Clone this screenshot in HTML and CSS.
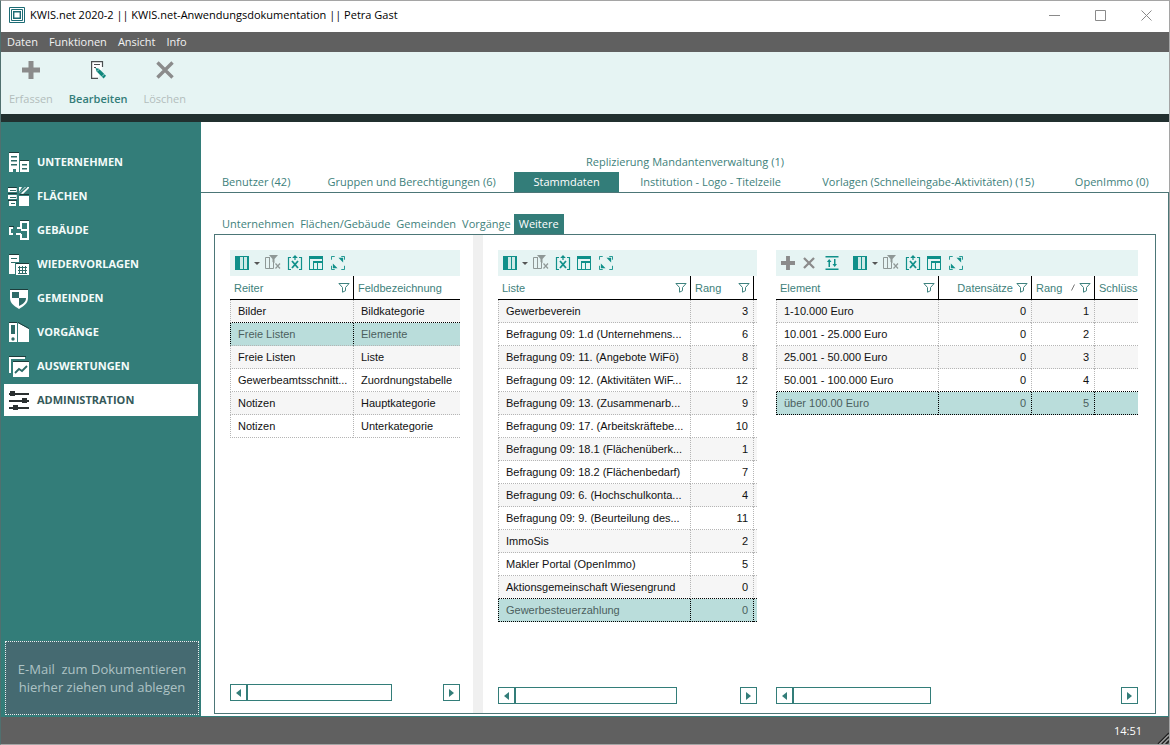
FILE: index.html
```html
<!DOCTYPE html>
<html lang="de">
<head>
<meta charset="utf-8">
<title>KWIS.net 2020-2</title>
<link rel="stylesheet" href="styles.css">
</head>
<body>
<svg class="sprite" aria-hidden="true">
  <symbol id="i-columns" viewBox="0 0 14 14"><path fill="#cfeae7" d="M5 1h8v12H5z"/><path fill="#10908a" d="M0 0h5v14H0zM5 0h9v1H5zM5 13h9v1H5zM12 0h2v14h-2zM8 0h1v14H8z"/></symbol>
  <symbol id="i-clear" viewBox="0 0 16 16"><path fill="none" stroke="#8f9896" d="M4.500 2.500H.5v11H5M4.500 2v12M4.500 13.500H8.500V6"/><path fill="#8f9896" d="M4 0h9l-3.500 4v4L7.500 7V4z"/><path stroke="#8f9896" stroke-width="1.200" d="M10.500 8.500l4.500 5M15 8.500l-4.500 5"/></symbol>
  <symbol id="i-excel" viewBox="0 0 15 16"><path fill="none" stroke="#10908a" stroke-width="1.200" d="M3.500 2.500H1v12h2.500M11.500 2.500H14v12h-2.500M7.500 1v4"/><path fill="#10908a" d="M7.500 0l2.800 3H4.700z"/><path stroke="#10908a" stroke-width="1.800" d="M4.500 6l6 7M10.500 6l-6 7"/></symbol>
  <symbol id="i-table" viewBox="0 0 14 14"><path fill="#10908a" d="M0 0h14v3H0zM0 3h1v11H0zM13 3h1v11h-1zM0 13h14v1H0zM4 5h10v2H4zM4 5h1v9H4zM8 5h1v9H8z"/></symbol>
  <symbol id="i-expand" viewBox="0 0 15 15"><path fill="none" stroke="#10908a" d="M.5 4V.5H4M11 .5h3.500V4M.5 10.500v4H4M11 14.500h3.500v-4"/><path fill="#10908a" d="M8 2h5v5zM2 8l5 5H2z"/></symbol>
  <symbol id="i-plus" viewBox="0 0 18 18"><path fill="#8b8b8b" d="M6.500 0h5v6.500H18v5h-6.500V18h-5v-6.500H0v-5h6.500z"/></symbol>
  <symbol id="i-cross" viewBox="0 0 16 16"><path fill="none" stroke="#8b8b8b" stroke-width="3" d="M1.300 1.300l13.400 13.400M14.700 1.300L1.300 14.700"/></symbol>
  <symbol id="i-sort" viewBox="0 0 13 14"><path fill="#10908a" d="M0 0h13v1.500H0zM0 12.500h13V14H0zM3 5h1.500v6H3zM8.500 3H10v6H8.500zM3.700 3L6 6H1.400zM9.200 11L7 8h4.500z"/></symbol>
  <symbol id="i-funnel" viewBox="0 0 12 10"><path fill="none" stroke="#3e827e" d="M.9.500h10.200L7.500 4.500v3.200l-3 1.500V4.500z"/></symbol>
  <symbol id="i-left" viewBox="0 0 5 8"><path fill="#337d79" d="M5 0v8L0 4z"/></symbol>
  <symbol id="i-right" viewBox="0 0 5 8"><path fill="#337d79" d="M0 0v8l5-4z"/></symbol>
  <symbol id="i-caret" viewBox="0 0 6 3"><path fill="#555" d="M0 0h6L3 3z"/></symbol>
</svg>

<div class="window">
  <header class="titlebar">
    <svg class="logo" viewBox="0 0 16 16" aria-hidden="true"><path fill="#fff" stroke="#1c6b74" d="M.5.500h15v15H.5z"/><path fill="none" stroke="#1c6b74" d="M2.500 2.500h11v11h-11z"/><path fill="#fff" stroke="#1c6b74" stroke-width="1.400" d="M4.700 4.700h6.600v6.600H4.700z"/></svg>
    <h1 class="caption">KWIS.net 2020-2 || KWIS.net-Anwendungsdokumentation || Petra Gast</h1>
    <div class="controls">
      <button class="control" aria-label="Minimieren"><svg viewBox="0 0 11 11"><path stroke="#8a8a8a" d="M0 5.500h11"/></svg></button>
      <button class="control" aria-label="Maximieren"><svg viewBox="0 0 11 11"><path fill="none" stroke="#8a8a8a" d="M.5.500h10v10H.5z"/></svg></button>
      <button class="control" aria-label="Schließen"><svg viewBox="0 0 11 11"><path stroke="#8a8a8a" d="M.5.500l10 10M10.500.5l-10 10"/></svg></button>
    </div>
  </header>

  <nav class="menubar">
    <button>Daten</button><button>Funktionen</button><button>Ansicht</button><button>Info</button>
  </nav>

  <div class="ribbon">
    <button class="tool" disabled><svg class="big"><use href="#i-plus"/></svg><span>Erfassen</span></button>
    <button class="tool current"><svg class="big" viewBox="0 0 18 18"><path fill="#fff" stroke="#4b4f50" stroke-width="1.200" d="M13.500 6V.6H2.600v16.800H9"/><path stroke="#4b4f50" d="M5 3.500h6M5 6.500h2"/><path fill="#10877c" d="M6.500 7l3.500.8 7 7-2.400 2.700-7-7z"/><path stroke="#e6f4f3" stroke-width=".7" d="M8 10.500L10.500 8M13 15.500l2.500-2.500"/></svg><span>Bearbeiten</span></button>
    <button class="tool" disabled><svg class="big"><use href="#i-cross"/></svg><span>Löschen</span></button>
  </div>

  <div class="body">
    <aside class="sidebar">
      <nav class="nav">
        <a href="#u"><svg viewBox="0 0 21 21"><path fill="#fff" d="M1 1h10v19H8v-3H5v3H1zM12 9h9v11h-9z"/><path fill="#1d3c3b" d="M1 0h10v1H1zM12 8h9v1h-9z"/><path fill="#2e6b68" d="M3 4h6v1.500H3zM3 8h6v1.500H3zM3 12h6v1.500H3zM14 12h5v1.500h-5zM14 16h5v1.500h-5z"/></svg>UNTERNEHMEN</a>
        <a href="#f"><svg viewBox="0 0 21 21"><path fill="#fff" d="M0 2h9v4H0zM11 7l6-6h4v1l-6 6zM0 9h9v4H0zM1 15h7v5H1zM11 10h10v10H11zM11 6V1h3z"/><path stroke="#1d3c3b" d="M0 1.500h9M0 7.500h9M10 8.500h11M0 14.500h9"/><path stroke="#337d79" stroke-width="1.500" d="M9.500 0v20M10 9l9-8"/><path stroke="#2e6b68" d="M2 4.500h6M2 11.500h6M3 17.500h4"/></svg>FLÄCHEN</a>
        <a href="#g"><svg viewBox="0 0 21 21"><path fill="none" stroke="#fff" stroke-width="2" d="M5 8H2v6h3M8 14h5M9 8h4M13 9V2h7v17h-7v-5M13 10h7"/><path stroke="#1d3c3b" d="M1 6.500h5M12 .5h9"/></svg>GEBÄUDE</a>
        <a href="#w"><svg viewBox="0 0 21 21"><path fill="#fff" d="M1 1h10v7H7v12H1zM8 10h13v11H8z"/><path fill="#1d3c3b" d="M1 0h10v1H1zM8 9h13v1H8z"/><path stroke="#2e6b68" d="M3 4.500h6M3 8.500h4M10 13.500h9M10 16.500h9M10 19.500h9M11.500 12v8M14.500 12v8M17.500 12v8"/></svg>WIEDERVORLAGEN</a>
        <a href="#m"><svg viewBox="0 0 21 21"><path fill="#fff" d="M2 2h18v8c0 5-4 8-9 11-5-3-9-6-9-11z"/><path fill="#2e6b68" d="M4 4h7v6H4zM11 10h7c0 4-3 6-7 8z"/><path fill="#1d3c3b" d="M2 1h18v1H2z"/></svg>GEMEINDEN</a>
        <a href="#v"><svg viewBox="0 0 21 21"><path fill="#fff" d="M1 1h8v19H1zM10 1l11 6v13H10z"/><path fill="none" stroke="#1d3c3b" d="M1 .5h8M10 .5l11 6"/><path fill="#2e6b68" d="M3 3h4v9H3z"/><circle cx="5" cy="17" r="1.700" fill="#2e6b68"/></svg>VORGÄNGE</a>
        <a href="#a"><svg viewBox="0 0 21 21"><path fill="none" stroke="#fff" stroke-width="2" d="M17 2H2v15"/><path fill="#fff" d="M5 6h16v15H5z"/><path stroke="#1d3c3b" d="M1 .5h17M5 5.500h16"/><path fill="none" stroke="#2e6b68" stroke-width="1.800" d="M7 17l4-4 3 2 5-5"/></svg>AUSWERTUNGEN</a>
        <a href="#d" class="active" aria-current="page"><svg viewBox="0 0 21 21"><path fill="#2a2f30" d="M1 3h20v2H1zM1 10h20v2H1zM1 17h20v2H1zM2 1h5v5H2zM14 8h5v5h-5zM5 15h5v5H5z"/></svg>ADMINISTRATION</a>
      </nav>
      <div class="drop">E-Mail&nbsp; zum Dokumentieren<br>hierher ziehen und ablegen</div>
    </aside>

    <main class="main">
      <div class="tabs-top"><button>Replizierung Mandantenverwaltung (1)</button></div>
      <div class="tabs-main">
        <button>Benutzer (42)</button>
        <button>Gruppen und Berechtigungen (6)</button>
        <button class="active">Stammdaten</button>
        <button>Institution - Logo - Titelzeile</button>
        <button>Vorlagen (Schnelleingabe-Aktivitäten) (15)</button>
        <button>OpenImmo (0)</button>
      </div>
      <div class="page">
        <div class="tabs-sub">
          <button>Unternehmen</button><button>Flächen/Gebäude</button><button>Gemeinden</button><button>Vorgänge</button><button class="active">Weitere</button>
        </div>
        <div class="panes">
          <section class="pane first">
            <div class="bar">
              <button class="split" aria-label="Spalten"><svg class="s14"><use href="#i-columns"/></svg><svg class="caret"><use href="#i-caret"/></svg></button>
              <button aria-label="Filter löschen"><svg class="s16"><use href="#i-clear"/></svg></button>
              <button aria-label="Excel-Export"><svg class="s16"><use href="#i-excel"/></svg></button>
              <button aria-label="Tabelle"><svg class="s14"><use href="#i-table"/></svg></button>
              <button aria-label="Vergrößern"><svg class="s14"><use href="#i-expand"/></svg></button>
            </div>
            <table>
              <colgroup><col class="c-reiter"><col></colgroup>
              <thead><tr><th><div>Reiter<svg class="fn"><use href="#i-funnel"/></svg></div></th><th><div>Feldbezeichnung</div></th></tr></thead>
              <tbody>
                <tr><td>Bilder</td><td>Bildkategorie</td></tr>
                <tr class="selected"><td>Freie Listen</td><td>Elemente</td></tr>
                <tr><td>Freie Listen</td><td>Liste</td></tr>
                <tr><td>Gewerbeamtsschnitt...</td><td>Zuordnungstabelle</td></tr>
                <tr><td>Notizen</td><td>Hauptkategorie</td></tr>
                <tr><td>Notizen</td><td>Unterkategorie</td></tr>
              </tbody>
            </table>
            <div class="scroll"><button aria-label="Nach links"><svg><use href="#i-left"/></svg></button><div class="track"><div class="thumb t1"></div></div><button aria-label="Nach rechts"><svg><use href="#i-right"/></svg></button></div>
          </section>
          <div class="splitter"></div>
          <section class="pane second">
            <div class="bar">
              <button class="split" aria-label="Spalten"><svg class="s14"><use href="#i-columns"/></svg><svg class="caret"><use href="#i-caret"/></svg></button>
              <button aria-label="Filter löschen"><svg class="s16"><use href="#i-clear"/></svg></button>
              <button aria-label="Excel-Export"><svg class="s16"><use href="#i-excel"/></svg></button>
              <button aria-label="Tabelle"><svg class="s14"><use href="#i-table"/></svg></button>
              <button aria-label="Vergrößern"><svg class="s14"><use href="#i-expand"/></svg></button>
            </div>
            <table>
              <colgroup><col><col class="c-rang"><col class="c-rest"></colgroup>
              <thead><tr><th><div>Liste<svg class="fn"><use href="#i-funnel"/></svg></div></th><th><div>Rang<svg class="fn"><use href="#i-funnel"/></svg></div></th><th></th></tr></thead>
              <tbody>
                <tr><td>Gewerbeverein</td><td class="n">3</td><td></td></tr>
                <tr><td>Befragung 09: 1.d (Unternehmens...</td><td class="n">6</td><td></td></tr>
                <tr><td>Befragung 09: 11. (Angebote WiFö)</td><td class="n">8</td><td></td></tr>
                <tr><td>Befragung 09: 12. (Aktivitäten WiF...</td><td class="n">12</td><td></td></tr>
                <tr><td>Befragung 09: 13. (Zusammenarb...</td><td class="n">9</td><td></td></tr>
                <tr><td>Befragung 09: 17. (Arbeitskräftebe...</td><td class="n">10</td><td></td></tr>
                <tr><td>Befragung 09: 18.1 (Flächenüberk...</td><td class="n">1</td><td></td></tr>
                <tr><td>Befragung 09: 18.2 (Flächenbedarf)</td><td class="n">7</td><td></td></tr>
                <tr><td>Befragung 09: 6. (Hochschulkonta...</td><td class="n">4</td><td></td></tr>
                <tr><td>Befragung 09: 9. (Beurteilung des...</td><td class="n">11</td><td></td></tr>
                <tr><td>ImmoSis</td><td class="n">2</td><td></td></tr>
                <tr><td>Makler Portal (OpenImmo)</td><td class="n">5</td><td></td></tr>
                <tr><td>Aktionsgemeinschaft Wiesengrund</td><td class="n">0</td><td></td></tr>
                <tr class="selected"><td>Gewerbesteuerzahlung</td><td class="n">0</td><td></td></tr>
              </tbody>
            </table>
            <div class="scroll"><button aria-label="Nach links"><svg><use href="#i-left"/></svg></button><div class="track"><div class="thumb t2"></div></div><button aria-label="Nach rechts"><svg><use href="#i-right"/></svg></button></div>
          </section>
          <section class="pane third">
            <div class="bar">
              <button aria-label="Neu"><svg class="s14"><use href="#i-plus"/></svg></button>
              <button aria-label="Löschen"><svg class="s12"><use href="#i-cross"/></svg></button>
              <button class="sort" aria-label="Sortieren"><svg class="s14"><use href="#i-sort"/></svg></button>
              <button class="split" aria-label="Spalten"><svg class="s14"><use href="#i-columns"/></svg><svg class="caret"><use href="#i-caret"/></svg></button>
              <button aria-label="Filter löschen"><svg class="s16"><use href="#i-clear"/></svg></button>
              <button aria-label="Excel-Export"><svg class="s16"><use href="#i-excel"/></svg></button>
              <button aria-label="Tabelle"><svg class="s14"><use href="#i-table"/></svg></button>
              <button aria-label="Vergrößern"><svg class="s14"><use href="#i-expand"/></svg></button>
            </div>
            <table>
              <colgroup><col><col class="c-daten"><col class="c-rang"><col class="c-key"></colgroup>
              <thead><tr><th><div>Element<svg class="fn"><use href="#i-funnel"/></svg></div></th><th><div class="end">Datensätze<svg class="fn"><use href="#i-funnel"/></svg></div></th><th><div>Rang<svg class="asc" viewBox="0 0 4 7"><path stroke="#777" d="M.5 6.500l3-6"/></svg><svg class="fn"><use href="#i-funnel"/></svg></div></th><th><div>Schlüss</div></th></tr></thead>
              <tbody>
                <tr><td>1-10.000 Euro</td><td class="n">0</td><td class="n">1</td><td></td></tr>
                <tr><td>10.001 - 25.000 Euro</td><td class="n">0</td><td class="n">2</td><td></td></tr>
                <tr><td>25.001 - 50.000 Euro</td><td class="n">0</td><td class="n">3</td><td></td></tr>
                <tr><td>50.001 - 100.000 Euro</td><td class="n">0</td><td class="n">4</td><td></td></tr>
                <tr class="selected"><td>über 100.00 Euro</td><td class="n">0</td><td class="n">5</td><td></td></tr>
              </tbody>
            </table>
            <div class="scroll"><button aria-label="Nach links"><svg><use href="#i-left"/></svg></button><div class="track"><div class="thumb t3"></div></div><button aria-label="Nach rechts"><svg><use href="#i-right"/></svg></button></div>
          </section>
        </div>
      </div>
    </main>
  </div>

  <footer class="status"><span>14:51</span><svg class="grip" viewBox="0 0 12 12" aria-hidden="true"><path stroke="#222" stroke-width="1.500" d="M1 12L12 1M5 12l7-7M9 12l3-3"/><path stroke="#ccc" d="M2.500 12L12 2.500M6.500 12L12 6.500"/></svg></footer>
</div>
</body>
</html>
```

FILE: styles.css
```css
* { box-sizing: border-box; }

body {
  margin: 0;
  font: 11px/16px "Open Sans", "Noto Sans", sans-serif;
  color: #111;
}

button {
  margin: 0;
  padding: 0;
  border: 0;
  background: none;
  color: inherit;
  font: inherit;
}

svg { display: block; flex: none; }
.sprite { position: absolute; width: 0; height: 0; }

.window {
  display: flex;
  flex-direction: column;
  min-height: 100vh;
  background: #fff;
  border: 1px solid #a5a5a5;
  border-left-color: #50706f;
}

/* Title bar and menu */
.titlebar {
  display: flex;
  align-items: center;
  height: 31px;
  padding: 0 8px 3px 8px;
}
.logo { width: 16px; height: 16px; margin-right: 5px; }
.caption { margin: 0; font-size: 11px; font-weight: 400; color: #000; }
.controls { display: flex; gap: 16px; margin-left: auto; }
.control { display: grid; place-items: center; width: 30px; height: 26px; }
.control svg { width: 11px; height: 11px; }

.menubar {
  display: flex;
  gap: 11px;
  height: 20px;
  padding-left: 6px;
  background: #606060;
  color: #f2f2f2;
}

.ribbon {
  display: flex;
  height: 70px;
  padding-left: 8px;
  gap: 16px;
  background: #e6f4f3;
  border-bottom: 8px solid #21302f;
}
.tool {
  display: flex;
  flex-direction: column;
  align-items: center;
  padding-top: 9px;
  gap: 12px;
  color: #b3bdbc;
}
.tool.current { color: #337d79; font-weight: 600; }
.big { width: 18px; height: 18px; }

/* Sidebar */
.body { display: flex; flex: 1; }
.sidebar {
  display: flex;
  flex-direction: column;
  flex: none;
  width: 200px;
  padding: 24px 2px 2px 3px;
  background: #337d79;
}
.nav { display: flex; flex-direction: column; gap: 2px; }
.nav a {
  display: flex;
  align-items: center;
  gap: 8px;
  height: 32px;
  padding-left: 4px;
  color: #f4fbfa;
  font-weight: 700;
  text-decoration: none;
}
.nav svg { width: 21px; height: 21px; }
.nav .active { margin-right: 1px; background: #fff; color: #35595a; }
.drop {
  display: grid;
  align-content: center;
  height: 74px;
  margin: auto 0 0 1px;
  border: 1px dotted #e8f0f0;
  background: #456a71;
  color: #aec3c5;
  font-size: 13px;
  line-height: 18px;
  text-align: center;
}

/* Tabs */
.main {
  display: flex;
  flex-direction: column;
  flex: 1;
  min-width: 0;
  padding-top: 30px;
  color: #3e7f7b;
}
.tabs-top { display: flex; justify-content: center; height: 20px; }
.tabs-main {
  display: grid;
  grid-template-columns: 106fr 204fr 105fr 182fr 252fr 114fr;
  height: 20px;
  padding-left: 2px;
}
.tabs-main button { white-space: nowrap; }
.tabs-main .active, .tabs-sub .active { background: #337d79; color: #fff; }
.page {
  display: flex;
  flex-direction: column;
  flex: 1;
  padding: 21px 12px 2px 13px;
  border: 1px solid #4c7677;
  border-left: 0;
  border-bottom-color: #337d79;
}
.tabs-sub { display: flex; height: 20px; padding-left: 5px; }
.tabs-sub button { padding: 0 3px; }
.tabs-sub .active { padding: 0 5px; }
.panes {
  display: flex;
  flex: 1;
  padding-left: 15px;
  padding-right: 17px;
  border: 1px solid #4c7677;
}

/* Lists */
.pane { display: flex; flex-direction: column; min-width: 0; padding: 15px 0 9px; }
.first { flex: 230 0 0; padding-bottom: 12px; }
.second { flex: 259 0 0; margin-left: 15px; }
.third { flex: 362 0 0; margin-left: 19px; }
.splitter { flex: none; width: 10px; margin-left: 13px; background: #f0f0f0; }
.bar {
  display: flex;
  align-items: center;
  flex: none;
  height: 26px;
  padding-left: 5px;
  background: #e6f4f3;
}
.bar button { display: flex; align-items: center; width: 22px; height: 22px; }
.bar .split { gap: 5px; width: 30px; }
.bar .sort { width: 28px; }
.s12 { width: 12px; height: 12px; }
.s14 { width: 14px; height: 14px; }
.s16 { width: 16px; height: 16px; }
.caret { width: 6px; height: 3px; }

table {
  width: 100%;
  table-layout: fixed;
  border-collapse: separate;
  border-spacing: 0;
  font: 11px/16px "Liberation Sans", Arial, sans-serif;
}
.c-reiter { width: 123px; }
.c-rang { width: 63px; }
.c-rest { width: 4px; }
.c-daten { width: 93px; }
.c-key { width: 44px; }
th {
  height: 24px;
  padding: 0;
  border-bottom: 1px solid #000;
  border-left: 1px solid #000;
  color: #3e7f7b;
  font-weight: 400;
  text-align: left;
}
th:first-child { border-left: 0; }
th div {
  display: flex;
  align-items: center;
  justify-content: space-between;
  height: 23px;
  padding: 0 3px 0 4px;
  white-space: nowrap;
}
th:last-child div { padding-right: 0; }
th .end { justify-content: flex-end; gap: 3px; }
th .asc { width: 4px; height: 7px; margin-left: 5px; }
.fn { width: 12px; height: 10px; }
td {
  height: 23px;
  padding: 0 0 0 7px;
  border-bottom: 1px dotted #b5b5b5;
  border-left: 1px dotted #b5b5b5;
  color: #111;
  white-space: nowrap;
  overflow: hidden;
}
td:empty { padding: 0; }
td.n { padding: 0 5px 0 0; text-align: right; }
tbody tr:nth-child(odd) { background: #f6f6f6; }
tbody tr:nth-child(even) { background: #fff; }
tbody tr.selected { background: #badddb; }
.selected td { border-color: #000; color: #4c5f5e; }
tr:has(+ .selected) td { border-bottom-color: #000; }
.first .selected td { border-bottom-color: #b5b5b5; }

.scroll { display: flex; height: 17px; margin-top: auto; }
.scroll button {
  display: grid;
  place-items: center;
  width: 17px;
  border: 1px solid #337d79;
}
.scroll button svg { width: 5px; height: 8px; }
.track { flex: 1; }
.thumb { height: 17px; border: 1px solid #337d79; }
.t1 { width: 74%; }
.t2 { width: 72%; }
.t3 { width: 42%; }

.status {
  display: flex;
  align-items: flex-end;
  justify-content: flex-end;
  height: 27px;
  background: #606060;
  color: #fff;
}
.status span { align-self: center; margin-right: 15px; }
.grip { width: 12px; height: 12px; }
```
